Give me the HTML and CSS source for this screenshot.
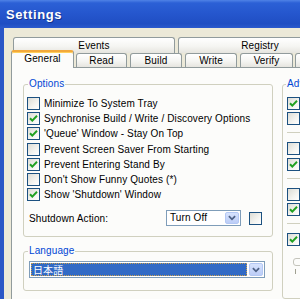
FILE: index.html
```html
<!DOCTYPE html>
<html lang="en">
<head>
  <meta charset="UTF-8" />
  <title>Settings</title>
  <link rel="stylesheet" href="styles.css">
</head>
<body>

<div class="titlebar">Settings</div>

<div class="frame">
  <div class="tabs">
    <div class="tabrow back">
      <div class="tab t-events">Events</div>
      <div class="tab t-registry">Registry</div>
    </div>
    <div class="tabrow front">
      <div class="tab t-general active">General</div>
      <div class="tab t-read">Read</div>
      <div class="tab t-build">Build</div>
      <div class="tab t-write">Write</div>
      <div class="tab t-verify">Verify</div>
      <div class="tab t-more"></div>
    </div>
  </div>

  <div class="page">
    <div class="cols">
      <div class="left">
        <!-- Options -->
        <fieldset class="group">
          <legend>Options</legend>
          <div class="opts">
            <div class="row"><span class="box"></span><span class="lbl">Minimize To System Tray</span></div>
            <div class="row"><span class="box on"><svg viewBox="0 0 11 11"><path d="M2 5.2 L4.3 7.6 L9 2.8" /></svg></span><span class="lbl">Synchronise Build / Write / Discovery Options</span></div>
            <div class="row"><span class="box on"><svg viewBox="0 0 11 11"><path d="M2 5.2 L4.3 7.6 L9 2.8" /></svg></span><span class="lbl">'Queue' Window - Stay On Top</span></div>
            <div class="row"><span class="box"></span><span class="lbl">Prevent Screen Saver From Starting</span></div>
            <div class="row"><span class="box on"><svg viewBox="0 0 11 11"><path d="M2 5.2 L4.3 7.6 L9 2.8" /></svg></span><span class="lbl">Prevent Entering Stand By</span></div>
            <div class="row"><span class="box"></span><span class="lbl">Don't Show Funny Quotes (*)</span></div>
            <div class="row"><span class="box on"><svg viewBox="0 0 11 11"><path d="M2 5.2 L4.3 7.6 L9 2.8" /></svg></span><span class="lbl">Show 'Shutdown' Window</span></div>

            <div class="shutdown">
              <span class="sd-label">Shutdown Action:</span>
              <div class="combo small">
                <span class="combo-text">Turn Off</span>
                <span class="combo-btn"><svg viewBox="0 0 9 6"><path d="M1 1 L4.5 4.5 L8 1" /></svg></span>
              </div>
              <span class="box sd-box"></span>
            </div>
          </div>
        </fieldset>

        <!-- Language -->
        <fieldset class="group lang">
          <legend>Language</legend>
          <div class="lang-body">
            <div class="combo wide">
              <span class="combo-text sel">日本語</span>
              <span class="combo-btn"><svg viewBox="0 0 9 6"><path d="M1 1 L4.5 4.5 L8 1" /></svg></span>
            </div>
          </div>
        </fieldset>
      </div>

      <!-- Advanced -->
      <fieldset class="group adv">
        <legend>Advanced</legend>
        <div class="adv-body">
          <div class="row"><span class="box on"><svg viewBox="0 0 11 11"><path d="M2 5.2 L4.3 7.6 L9 2.8" /></svg></span></div>
          <div class="row"><span class="box"></span></div>
          <div class="sep"></div>
          <div class="row"><span class="box"></span></div>
          <div class="row"><span class="box on"><svg viewBox="0 0 11 11"><path d="M2 5.2 L4.3 7.6 L9 2.8" /></svg></span></div>
          <div class="sep"></div>
          <div class="row"><span class="box"></span></div>
          <div class="row"><span class="box on"><svg viewBox="0 0 11 11"><path d="M2 5.2 L4.3 7.6 L9 2.8" /></svg></span></div>
          <div class="sep"></div>
          <div class="row"><span class="box on"><svg viewBox="0 0 11 11"><path d="M2 5.2 L4.3 7.6 L9 2.8" /></svg></span></div>
          <div class="thumb"></div>
          <div class="tick"></div>
        </div>
      </fieldset>
    </div>
  </div>
</div>

</body>
</html>
```

FILE: styles.css
```css
html, body {
  margin: 0; padding: 0;
  overflow: hidden;
}
body {
  width: 300px; height: 299px;
  background-color: #ece9d8;
  font-family: 'Liberation Sans', Arial, sans-serif;
  font-size: 10px;
  letter-spacing: 0.12px;
  color: #000;
}
.titlebar {
  height: 28px;
  box-sizing: border-box;
  padding-left: 6px;
  line-height: 29px;
  font-weight: bold;
  font-size: 13px;
  letter-spacing: 0.6px;
  color: #fff;
  text-shadow: 1px 1px #14348f;
  background: linear-gradient(#4f82e6 0, #2b60d6 3px, #2556cd 50%, #1f4ec3 85%, #2b5acd 100%);
}
.frame {
  height: 271px;
  box-sizing: border-box;
  border-left: 4px solid #2a56c6;
  padding: 9px 0 0 7px;
}

/* tabs */
.tabrow {
  display: flex;
}
.tabrow.back {
  height: 16px;
  padding-left: 2px;
}
.tabrow.front {
  height: 14px;
  align-items: flex-end;
  position: relative;
  z-index: 1;
}
.tab {
  flex: none;
  box-sizing: border-box;
  border: 1px solid #919b9c;
  border-bottom: none;
  border-radius: 3px 3px 0 0;
  background: linear-gradient(#fff, #f5f5f2 55%, #e6e5df);
  text-align: center;
  white-space: nowrap;
}
.back .tab {
  height: 16px;
  line-height: 15px;
}
.front .tab {
  height: 14px;
  line-height: 13px;
}
.t-events { width: 162px; margin-right: 3px; }
.t-registry { width: 164px; }
.t-general { width: 63px; margin-right: 2px; }
.t-read { width: 51px; margin-right: 3px; }
.t-build { width: 52px; margin-right: 3px; }
.t-write { width: 52px; margin-right: 3px; }
.t-verify { width: 53px; margin-right: 2px; }
.t-more { width: 60px; }
.front .tab.active {
  height: 18px;
  margin-bottom: -1px;
  background: #fcfcfa;
  border-top: 2px solid #f2a93b;
  box-shadow: inset 0 1px #ffcf5a;
  line-height: 13px;
}

/* tab page */
.page {
  width: 330px;
  height: 240px;
  box-sizing: border-box;
  border: 1px solid #919b9c;
  background: #fcfcfa;
  padding: 10px 0 0 11px;
}
.cols {
  display: flex;
  align-items: flex-start;
}
.left {
  width: 250px;
  flex: none;
}
.group {
  margin: 0;
  padding: 0;
  min-width: 0;
  border: 1px solid #d0d0bf;
  border-radius: 3px;
}
.group legend {
  margin-left: 4px;
  padding: 0 1px;
  line-height: 12px;
  color: #0046d5;
}
.opts {
  padding: 7px 0 10px 3px;
}
.row {
  display: flex;
  align-items: flex-start;
  height: 15.2px;
}
.lbl {
  margin-left: 4px;
  line-height: 13px;
  white-space: nowrap;
}
.box {
  flex: none;
  width: 13px;
  height: 13px;
  box-sizing: border-box;
  border: 1px solid #1c5180;
  background: linear-gradient(135deg, #dcdcd5, #f4f4f0 60%, #fff);
  display: flex;
  align-items: center;
  justify-content: center;
}
.box svg {
  width: 11px;
  height: 11px;
}
.box svg path {
  fill: none;
  stroke: #21a121;
  stroke-width: 2;
}

.shutdown {
  display: flex;
  align-items: center;
  height: 16px;
  margin-top: 7px;
  padding-left: 2px;
}
.sd-label {
  width: 137px;
  white-space: nowrap;
}
.sd-box {
  margin-left: 8px;
}

/* combo boxes */
.combo {
  display: flex;
  box-sizing: border-box;
  border: 1px solid #7f9db9;
  background: #fff;
  padding: 1px;
}
.combo.small {
  width: 75px;
  height: 16px;
}
.combo.wide {
  width: 236px;
  height: 17px;
}
.combo-text {
  flex: 1;
  padding-left: 2px;
  line-height: 12px;
  white-space: nowrap;
}
.combo-text.sel {
  background: #316ac5;
  color: #fff;
  outline: 1px dotted #c8a050;
  outline-offset: -1px;
  font-family: 'Noto Sans CJK JP', sans-serif;
  font-size: 10px;
  line-height: 13px;
  padding-left: 2px;
}
.combo-btn {
  flex: none;
  width: 14px;
  margin-left: 2px;
  box-sizing: border-box;
  border: 1px solid #b4c8f4;
  border-radius: 2px;
  background: linear-gradient(#d7e3fd, #bccdf7);
  display: flex;
  align-items: center;
  justify-content: center;
}
.combo-btn svg {
  width: 8px;
  height: 6px;
}
.combo-btn svg path {
  fill: none;
  stroke: #4d6185;
  stroke-width: 2;
}

.lang {
  margin-top: 8px;
}
.lang-body {
  padding: 4px 0 12px 5px;
}

/* advanced column */
.adv {
  margin-left: 9px;
  width: 40px;
  flex: none;
}
.adv legend {
  margin-left: 3px;
}
.adv-body {
  padding: 7px 0 24px 4px;
}
.sep {
  height: 1px;
  background: #d0d0bf;
  margin: 5px 0 9px 0;
}
.thumb {
  margin: 10px 0 0 6px;
  width: 20px;
  height: 8px;
  box-sizing: border-box;
  border: 1px solid #c4c4bb;
  border-radius: 3px;
}
.tick {
  margin: 3px 0 0 8px;
  width: 1px;
  height: 5px;
  background: #a0a090;
}
```
